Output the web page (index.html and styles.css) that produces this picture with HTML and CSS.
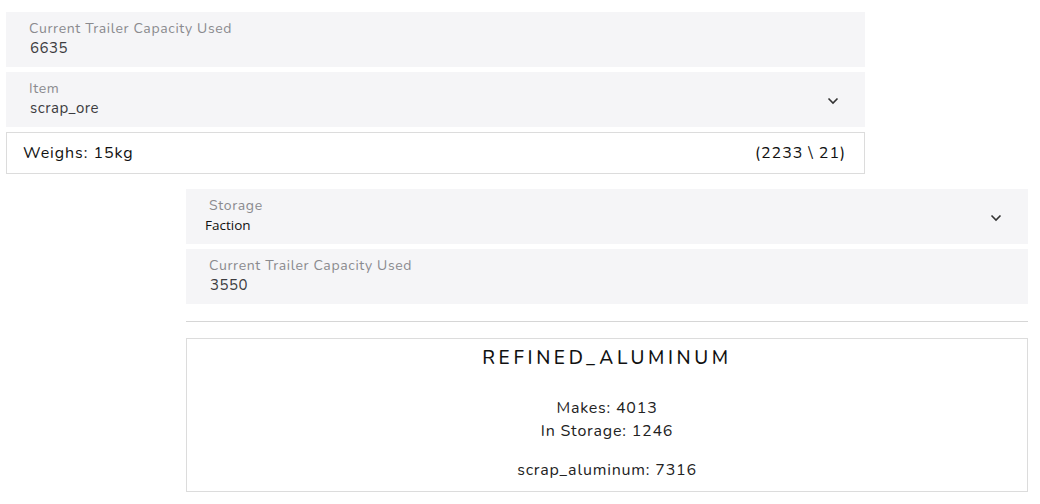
FILE: index.html
```html
<!DOCTYPE html>
<html>
<head>
<meta charset="utf-8">
<link rel="stylesheet" href="styles.css">
</head>
<body>
<div class="page">
  <section class="top">
    <div class="field">
      <div class="label">Current Trailer Capacity Used</div>
      <div class="value">6635</div>
    </div>
    <div class="field select">
      <div class="field-text">
        <div class="label">Item</div>
        <div class="value">scrap_ore</div>
      </div>
      <svg class="chev" width="12" height="8" viewBox="0 0 12 8"><path d="M1.5 1.5 L6 6 L10.5 1.5" fill="none" stroke="#333" stroke-width="1.6"/></svg>
    </div>
    <div class="weighs">
      <span>Weighs: 15kg</span>
      <span>(2233 \ 21)</span>
    </div>
  </section>
  <section class="bottom">
    <div class="field select">
      <div class="field-text">
        <div class="label">Storage</div>
        <div class="value faction">Faction</div>
      </div>
      <svg class="chev" width="12" height="8" viewBox="0 0 12 8"><path d="M1.5 1.5 L6 6 L10.5 1.5" fill="none" stroke="#333" stroke-width="1.6"/></svg>
    </div>
    <div class="field">
      <div class="label">Current Trailer Capacity Used</div>
      <div class="value">3550</div>
    </div>
    <hr class="divider">
    <div class="card">
      <h2 class="title">REFINED_ALUMINUM</h2>
      <div class="stats">
        <div>Makes: 4013</div>
        <div>In Storage: 1246</div>
      </div>
      <div class="ingredient">scrap_aluminum: 7316</div>
    </div>
  </section>
</div>
</body>
</html>
```
FILE: styles.css
```css
* { box-sizing: border-box; }
body {
  margin: 0;
  background: #fff;
  font-family: "Nunito", "Lato", "Open Sans", sans-serif;
  color: #222;
}
.page {
  padding: 12px 12px 0 6px;
}
.top {
  width: 859px;
  display: flex;
  flex-direction: column;
  gap: 5px;
}
.field {
  background: #f5f5f7;
  height: 55px;
  padding: 8px 23px 0 23px;
}
.field.select {
  display: flex;
  align-items: center;
  justify-content: space-between;
  padding-top: 0;
  padding-right: 26px;
}
.field-text { margin-top: -2px; }
.label {
  font-size: 14px;
  color: #8a8a8e;
  line-height: 17px;
  letter-spacing: 0.65px;
}
.value {
  font-size: 15px;
  color: #3c3c40;
  line-height: 20px;
  margin-top: 1px;
  letter-spacing: 0.5px;
  padding-left: 1px;
}
.value.faction {
  font-family: "Open Sans", sans-serif;
  font-size: 13.5px;
  color: #111;
  padding-left: 0;
  margin-left: -4px;
  letter-spacing: 0;
}
.chev { margin-top: 2px; }
.weighs {
  border: 1px solid #dcdcdc;
  height: 42px;
  display: flex;
  align-items: center;
  justify-content: space-between;
  padding: 0 18px 0 16px;
  font-size: 16px;
  color: #111;
  letter-spacing: 0.95px;
}
.bottom {
  margin-left: 180px;
  margin-top: 15px;
  display: flex;
  flex-direction: column;
  gap: 5px;
}
.divider {
  border: 0;
  border-top: 1px solid #d6d6d6;
  margin: 12px 0 11px 0;
  height: 0;
}
.card {
  border: 1px solid #dcdcdc;
  height: 154px;
  text-align: center;
  padding-top: 6px;
}
.title {
  margin: 0;
  font-size: 19px;
  font-weight: 500;
  letter-spacing: 3.65px;
  color: #111;
  line-height: 26px;
}
.stats {
  margin-top: 25px;
  font-size: 16px;
  line-height: 24px;
  letter-spacing: 0.8px;
  color: #222;
}
.stats div + div { margin-top: -1px; }
.ingredient {
  margin-top: 15px;
  font-size: 16px;
  line-height: 24px;
  letter-spacing: 0.8px;
  color: #222;
}
```
